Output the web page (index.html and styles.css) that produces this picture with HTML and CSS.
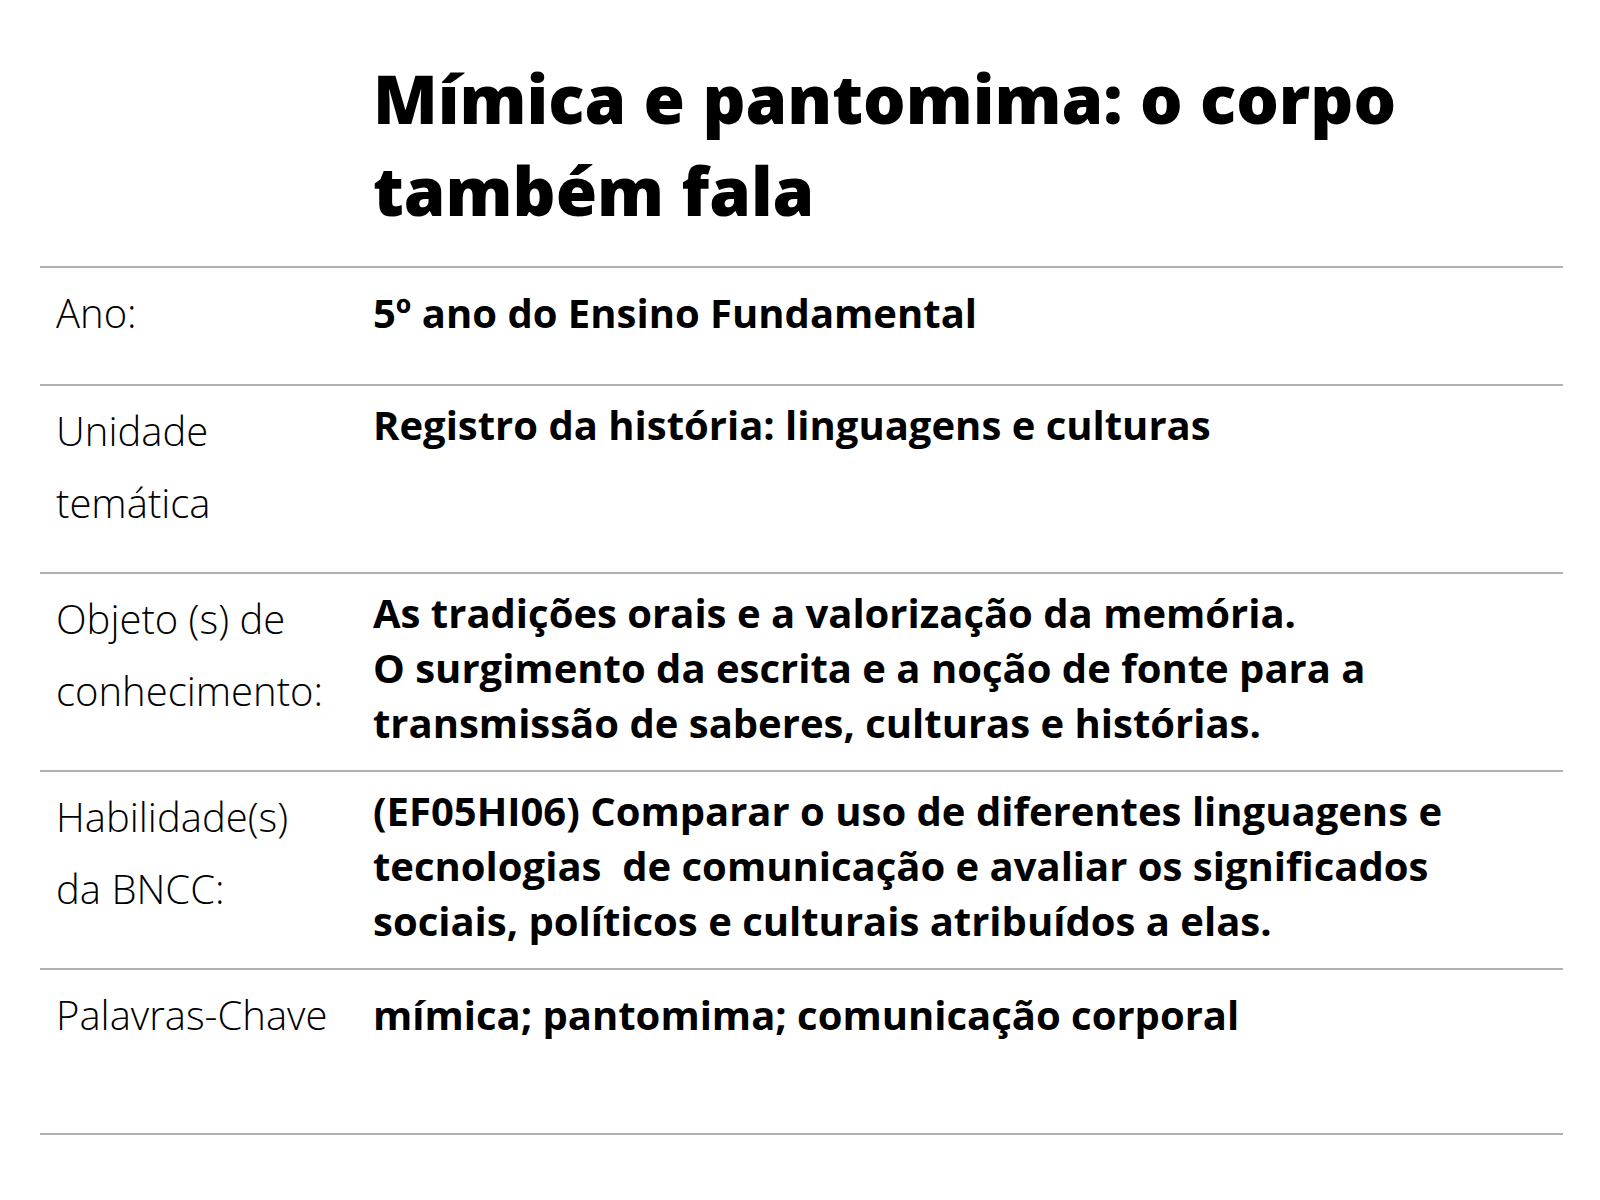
FILE: index.html
```html
<!DOCTYPE html>
<html lang="pt">
<head>
<meta charset="utf-8">
<title>Mímica e pantomima</title>
<link rel="stylesheet" href="styles.css">
</head>
<body>
<div class="page">
  <div class="head">
    <div class="head-spacer"></div>
    <h1 class="title">Mímica e pantomima: o corpo também fala</h1>
  </div>
  <div class="table">
    <div class="row row-ano">
      <div class="label">Ano:</div>
      <div class="value value-single">5º ano do Ensino Fundamental</div>
    </div>
    <div class="row row-unidade">
      <div class="label">Unidade temática</div>
      <div class="value">Registro da história: linguagens e culturas</div>
    </div>
    <div class="row">
      <div class="label">Objeto (s) de conhecimento:</div>
      <div class="value">As tradições orais e a valorização da memória.<br>O surgimento da escrita e a noção de fonte para a transmissão de saberes, culturas e histórias.</div>
    </div>
    <div class="row">
      <div class="label">Habilidade(s) da BNCC:</div>
      <div class="value">(EF05HI06) Comparar o uso de diferentes linguagens e tecnologias &nbsp;de comunicação e avaliar os significados sociais, políticos e culturais atribuídos a elas.</div>
    </div>
    <div class="row row-palavras">
      <div class="label">Palavras-Chave</div>
      <div class="value value-single">mímica; pantomima; comunicação corporal</div>
    </div>
  </div>
</div>
</body>
</html>
```
FILE: styles.css
```css
* { box-sizing: border-box; }
html, body { margin: 0; padding: 0; background: #ffffff; }
body {
  font-family: "Open Sans", "Noto Sans", sans-serif;
  color: #000000;
}
.page {
  width: 1600px;
  padding: 52px 37px 0 40px;
}
.head {
  display: flex;
  padding-bottom: 30px;
}
.head-spacer { width: 333px; flex: none; }
.title {
  margin: 0;
  font-size: 67px;
  line-height: 92px;
  font-weight: 800;
  width: 1080px;
}
.table {
  border-bottom: 2px solid #b0b0b0;
}
.row {
  display: flex;
  border-top: 2px solid #b0b0b0;
  padding-bottom: 20px;
}
.row-ano { min-height: 118px; }
.row-unidade { min-height: 188px; }
.row-palavras { min-height: 165px; }
.label {
  width: 333px;
  flex: none;
  padding: 9px 42px 0 16px;
  font-size: 40px;
  line-height: 72px;
  font-weight: 300;
}
.value {
  flex: 1;
  padding: 11px 70px 0 0;
  font-size: 40px;
  line-height: 55px;
  font-weight: 700;
}
.value-single {
  padding-top: 17px;
}
```
